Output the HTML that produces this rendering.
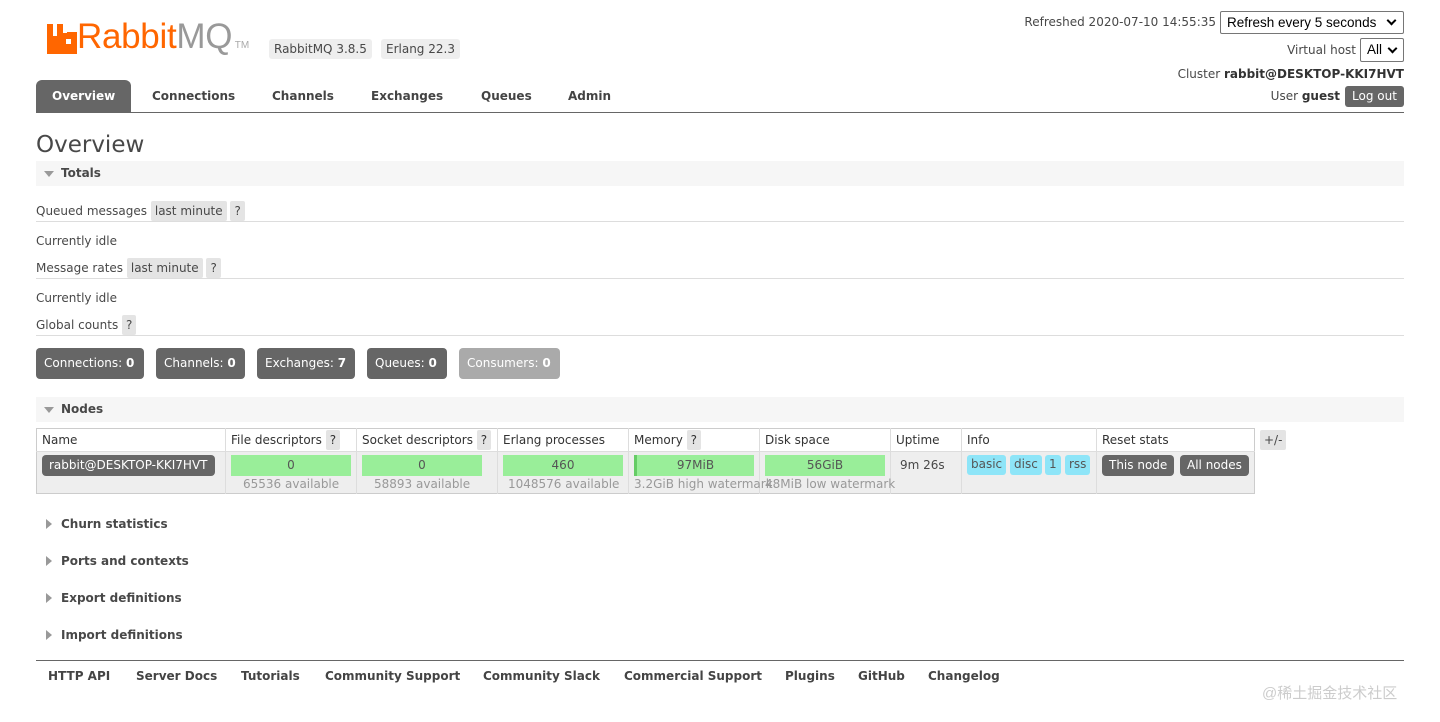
<!DOCTYPE html>
<html><head><meta charset="utf-8"><style>
*{box-sizing:border-box;margin:0;padding:0}
body{width:1440px;height:722px;background:#fff;font-family:"DejaVu Sans","Liberation Sans",sans-serif;font-size:12px;color:#484848;position:relative;overflow:hidden}
.a{position:absolute;white-space:nowrap}
.tag{background:#eee;border-radius:3px;padding:3px 5px}
.q{background:#e4e4e4;padding:3px 4px;border-radius:2px}
.nav{font-weight:bold;font-size:12px;color:#444}
.hr{position:absolute;height:1px;background:#ddd}
.sec{position:absolute;left:36px;width:1368px;height:25px;background:#f6f6f6;font-weight:bold;font-size:12px;color:#484848;padding:5px 0 0 25px}
.tri{position:absolute;left:8px;top:10px;width:0;height:0;border-left:5px solid transparent;border-right:5px solid transparent;border-top:6px solid #999}
.trr{position:absolute;left:10px;top:7px;width:0;height:0;border-top:5px solid transparent;border-bottom:5px solid transparent;border-left:6px solid #999}
.cnt{position:absolute;top:348px;height:31px;background:#666;color:#fff;border-radius:4px;padding:8px 8px;font-size:12px}
.g{position:absolute;top:455px;height:21px;background:#9e9;text-align:center;padding-top:3px;color:#555}
.sub{position:absolute;top:477px;color:#999;font-size:12px}
.b{position:absolute;top:455px;height:20px;background:#8ee5f8;border-radius:3px;padding:2px 4px;color:#555}
.d{position:absolute;height:21px;background:#666;color:#fff;border-radius:4px;padding:3px 7px}
.th{position:absolute;top:433px;font-size:12px;color:#333}
.vl{position:absolute;top:428px;width:1px;height:66px;background:#ddd}
.ft{font-weight:bold;font-size:12px;color:#444}
.chev{position:absolute;width:7px;height:7px;border-right:2px solid #000;border-bottom:2px solid #000;transform:rotate(45deg)}
</style></head><body>
<svg class="a" style="left:47px;top:24px" width="30" height="30" viewBox="0 0 30 30"><path d="M0 0h6v12h4V0h6v9h4v-1h10v22H0z" fill="#f60"/><rect x="19" y="15" width="5" height="5" fill="#fff"/></svg>
<div class="a" style="left:77px;top:17px;font-family:'Liberation Sans',sans-serif;font-size:35px;color:#f60;letter-spacing:-0.3px">Rabbit<span style="color:#999">MQ</span><span style="font-size:10px;color:#aaa;letter-spacing:0"> TM</span></div>
<div class="a tag" style="left:269px;top:39px">RabbitMQ 3.8.5</div>
<div class="a tag" style="left:381px;top:39px">Erlang 22.3</div>
<div class="a" style="left:36px;top:80px;width:95px;height:33px;background:#666;border-radius:6px 6px 0 0"></div>
<div class="a nav" style="left:52px;top:89px;color:#fff">Overview</div>
<div class="a nav" style="left:152px;top:89px">Connections</div>
<div class="a nav" style="left:272px;top:89px">Channels</div>
<div class="a nav" style="left:371px;top:89px">Exchanges</div>
<div class="a nav" style="left:481px;top:89px">Queues</div>
<div class="a nav" style="left:568px;top:89px">Admin</div>
<div class="hr" style="left:36px;top:112px;width:1368px;background:#666"></div>
<div class="a" style="right:224px;top:15px">Refreshed 2020-07-10 14:55:35</div>
<div class="a" style="left:1220px;top:11px;width:184px;height:23px;border:1px solid #767676;border-radius:2px;padding:3px 6px;color:#000;font-family:'Liberation Sans',sans-serif;font-size:13.5px">Refresh every 5 seconds<span class="chev" style="right:8px;top:5px"></span></div>
<div class="a" style="right:84px;top:43px">Virtual host</div>
<div class="a" style="left:1360px;top:38px;width:44px;height:24px;border:1px solid #767676;border-radius:2px;padding:3px 6px;color:#000;font-family:'Liberation Sans',sans-serif;font-size:13.5px">All<span class="chev" style="right:7px;top:6px"></span></div>
<div class="a" style="right:36px;top:67px">Cluster <b style="color:#333">rabbit@DESKTOP-KKI7HVT</b></div>
<div class="a" style="right:100px;top:89px">User <b style="color:#333">guest</b></div>
<div class="a" style="left:1345px;top:86px;width:59px;height:21px;background:#666;color:#fff;border-radius:3px;padding:3px 0 0 7px">Log out</div>
<div class="a" style="left:36px;top:132px;font-size:23px;color:#484848;font-family:'DejaVu Sans',sans-serif">Overview</div>
<div class="sec" style="top:161px"><span class="tri"></span>Totals</div>
<div class="a" style="left:36px;top:204px">Queued messages <span class="q">last minute</span> <span class="q">?</span></div>
<div class="hr" style="left:36px;top:221px;width:1368px"></div>
<div class="a" style="left:36px;top:234px">Currently idle</div>
<div class="a" style="left:36px;top:261px">Message rates <span class="q">last minute</span> <span class="q">?</span></div>
<div class="hr" style="left:36px;top:278px;width:1368px"></div>
<div class="a" style="left:36px;top:291px">Currently idle</div>
<div class="a" style="left:36px;top:318px">Global counts <span class="q">?</span></div>
<div class="hr" style="left:36px;top:335px;width:1368px"></div>
<div class="cnt" style="left:36px;width:108px">Connections: <b>0</b></div>
<div class="cnt" style="left:156px;width:89px">Channels: <b>0</b></div>
<div class="cnt" style="left:257px;width:98px">Exchanges: <b>7</b></div>
<div class="cnt" style="left:367px;width:80px">Queues: <b>0</b></div>
<div class="cnt" style="left:459px;width:101px;background:#aaa">Consumers: <b>0</b></div>
<div class="sec" style="top:397px"><span class="tri"></span>Nodes</div>
<div class="a" style="left:36px;top:428px;width:1219px;height:66px;border:1px solid #ccc"></div>
<div class="a" style="left:37px;top:452px;width:1217px;height:41px;background:#eee"></div>
<div class="hr" style="left:36px;top:451px;width:1219px"></div>
<div class="vl" style="left:225px"></div><div class="vl" style="left:356px"></div><div class="vl" style="left:497px"></div><div class="vl" style="left:628px"></div><div class="vl" style="left:759px"></div><div class="vl" style="left:890px"></div><div class="vl" style="left:961px"></div><div class="vl" style="left:1096px"></div>
<div class="th" style="left:42px">Name</div>
<div class="th" style="left:231px">File descriptors <span class="q">?</span></div>
<div class="th" style="left:362px">Socket descriptors <span class="q">?</span></div>
<div class="th" style="left:503px">Erlang processes</div>
<div class="th" style="left:634px">Memory <span class="q">?</span></div>
<div class="th" style="left:765px">Disk space</div>
<div class="th" style="left:896px">Uptime</div>
<div class="th" style="left:967px">Info</div>
<div class="th" style="left:1102px">Reset stats</div>
<div class="a q" style="left:1260px;top:430px">+/-</div>
<div class="d" style="left:42px;top:455px">rabbit@DESKTOP-KKI7HVT</div>
<div class="g" style="left:231px;width:120px">0</div><div class="sub" style="left:243px">65536 available</div>
<div class="g" style="left:362px;width:120px">0</div><div class="sub" style="left:374px">58893 available</div>
<div class="g" style="left:503px;width:120px">460</div><div class="sub" style="left:508px">1048576 available</div>
<div class="g" style="left:634px;width:120px;border-left:3px solid #6c6">97MiB</div><div class="sub" style="left:634px">3.2GiB high watermark</div>
<div class="g" style="left:765px;width:120px">56GiB</div><div class="sub" style="left:765px">48MiB low watermark</div>
<div class="a" style="left:900px;top:458px">9m 26s</div>
<div class="b" style="left:967px">basic</div><div class="b" style="left:1010px">disc</div><div class="b" style="left:1045px">1</div><div class="b" style="left:1065px">rss</div>
<div class="d" style="left:1102px;top:455px">This node</div><div class="d" style="left:1180px;top:455px">All nodes</div>
<div class="sec" style="top:512px;background:#fff"><span class="trr"></span>Churn statistics</div>
<div class="sec" style="top:549px;background:#fff"><span class="trr"></span>Ports and contexts</div>
<div class="sec" style="top:586px;background:#fff"><span class="trr"></span>Export definitions</div>
<div class="sec" style="top:623px;background:#fff"><span class="trr"></span>Import definitions</div>
<div class="hr" style="left:36px;top:660px;width:1368px;background:#666"></div>
<div class="a ft" style="left:48px;top:669px">HTTP API</div>
<div class="a ft" style="left:136px;top:669px">Server Docs</div>
<div class="a ft" style="left:241px;top:669px">Tutorials</div>
<div class="a ft" style="left:325px;top:669px">Community Support</div>
<div class="a ft" style="left:483px;top:669px">Community Slack</div>
<div class="a ft" style="left:624px;top:669px">Commercial Support</div>
<div class="a ft" style="left:785px;top:669px">Plugins</div>
<div class="a ft" style="left:858px;top:669px">GitHub</div>
<div class="a ft" style="left:928px;top:669px">Changelog</div>
<div class="a" style="left:1262px;top:682px;font-family:'Liberation Sans','Noto Sans CJK SC',sans-serif;font-size:15px;color:#ccc">@稀土掘金技术社区</div>
</body></html>
